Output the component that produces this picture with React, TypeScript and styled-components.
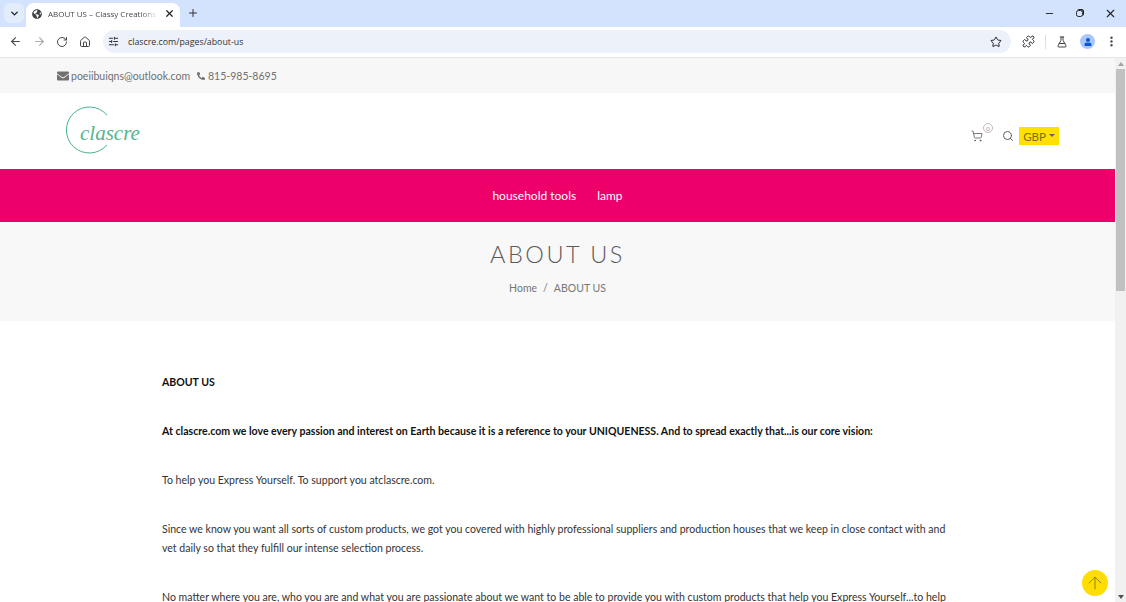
import React from "react";
import styled, { createGlobalStyle } from "styled-components";
import { ArrowLeft, ArrowRight, RotateCw, House, SlidersHorizontal, Star, Puzzle, FlaskConical, EllipsisVertical, ChevronDown, X, Plus, Minus, ShoppingCart, Search, ArrowUp } from "lucide-react";
import { FaEnvelope, FaGlobeAmericas, FaPhoneAlt, FaUser } from "react-icons/fa";

const Global = createGlobalStyle`
  html, body { margin: 0; padding: 0; height: 100%; overflow: hidden; background: #fff; }
  #root { height: 602px; width: 1126px; overflow: hidden; display: flex; flex-direction: column; font-family: "Lato", "Liberation Sans", sans-serif; }
  * { box-sizing: border-box; }
`;

const TabStrip = styled.div`
  height: 27px; background: #d3e3fd; display: flex; align-items: flex-end; flex: none;
`;
const TabSearch = styled.div`
  width: 20px; height: 20px; margin: 0 0 4px 4px; border-radius: 6px; background: #e3ecfb;
  display: flex; align-items: center; justify-content: center; color: #1f1f1f;
`;
const Tab = styled.div`
  width: 154px; height: 24px; margin-left: 2px; background: #fff; border-radius: 8px 8px 0 0;
  display: flex; align-items: center; padding: 0 5px 3px 6px; gap: 6px; color: #3c4043;
`;
const TabTitle = styled.span`
  flex: 1; min-width: 0; font-size: 8px; white-space: nowrap; overflow: hidden; color: #45474a;
  font-family: "Open Sans", sans-serif;
  mask-image: linear-gradient(90deg, #000 85%, transparent);
`;
const NewTab = styled.div`
  margin: 0 0 5px 7px; height: 18px; display: flex; align-items: center; color: #333;
`;
const WindowButtons = styled.div`
  margin: 0 9px 5px auto; height: 18px; display: flex; align-items: center; gap: 21px; color: #222;
`;
const RestoreGlyph = styled.span`
  width: 7px; height: 7px; border: 1.5px solid #222; border-radius: 2.5px; box-shadow: 1px -1px 0 0 #222;
`;
const Toolbar = styled.div`
  height: 31px; flex: none; background: #fff; display: flex; align-items: center; padding: 0 8px 1px 9px;
  border-bottom: 1px solid #e4e5e8; color: #444746;
`;
const NavIcons = styled.div`
  display: flex; align-items: center; gap: 10.5px; width: 94px;
`;
const Omnibox = styled.div`
  width: 908px; height: 23px; border-radius: 12px; background: #edf2fa; display: flex; align-items: center;
  padding: 0 9px 0 5px; gap: 9px; font-size: 8.8px; color: #333; font-family: "Open Sans", sans-serif;
`;
const Url = styled.span` flex: 1; `;
const ToolIcons = styled.div`
  display: flex; align-items: center; margin-left: 11px; flex: 1; justify-content: space-between;
`;
const Divider = styled.span` width: 1px; height: 14px; background: #dcdfe3; `;
const Avatar = styled.span`
  width: 15px; height: 15px; margin-left: 3px; border-radius: 50%; background: #a8c7fa; color: #0b57d0;
  display: flex; align-items: center; justify-content: center;
`;

const Viewport = styled.div`
  flex: 1; display: flex; min-height: 0; position: relative;
`;
const Page = styled.div`
  flex: 1; min-width: 0; overflow: hidden;
`;
const Scrollbar = styled.div`
  width: 11px; flex: none; background: #f1f1f1; display: flex; flex-direction: column; align-items: center; padding-top: 4px;
`;
const ScrollArrow = styled.span<{ $down?: boolean }>`
  width: 0; height: 0; border-left: 3.5px solid transparent; border-right: 3.5px solid transparent;
  ${p => p.$down ? "border-top: 4px solid #505050; margin-top: auto; margin-bottom: 3px;" : "border-bottom: 4px solid #a3a3a3;"}
`;
const ScrollThumb = styled.div`
  width: 9px; height: 222px; margin-top: 3px; background: #c1c1c1;
`;

const TopBar = styled.div`
  height: 35px; background: #f7f7f7; display: flex; align-items: center; padding-left: 57px; gap: 7px;
  font-size: 10.5px; color: #707070;
`;
const Contact = styled.span`
  display: inline-flex; align-items: center; gap: 2px;
`;
const PhoneContact = styled(Contact)`
  gap: 3px;
`;
const Header = styled.div`
  height: 76px; background: #fff; display: flex; align-items: center; padding: 0 56px 0 66px; justify-content: space-between;
`;
const Actions = styled.div`
  display: flex; align-items: center; margin-top: 10px; color: #5c5c5c;
`;
const Cart = styled.div`
  position: relative; width: 22px; height: 16px; margin-right: 9px; display: flex; align-items: center;
`;
const CartBadge = styled.span`
  position: absolute; left: 12px; top: -5px; width: 10px; height: 10px; border-radius: 50%; border: 1px solid #bbb;
  font-size: 6.5px; color: #999; display: flex; align-items: center; justify-content: center; background: #fff;
`;
const Currency = styled.div`
  width: 40px; height: 18px; margin-left: 5px; background: #ffe000; color: #77701f; font-size: 11.5px;
  display: flex; align-items: center; justify-content: center; gap: 3px;
`;
const Caret = styled.span`
  width: 0; height: 0; border-left: 3px solid transparent; border-right: 3px solid transparent; border-top: 3px solid #666;
  margin-top: -1px;
`;
const NavBar = styled.nav`
  height: 53px; background: #ee006b; display: flex; align-items: center; justify-content: center; gap: 21px;
  color: #fff; font-size: 12px;
`;
const Hero = styled.div`
  height: 99px; background: #f8f8f8; display: flex; flex-direction: column; align-items: center; padding-top: 17px;
`;
const HeroTitle = styled.h1`
  margin: 0; font-size: 23.5px; line-height: 30px; font-weight: 300; letter-spacing: 2.5px; color: #5a5a5a;
`;
const Crumbs = styled.div`
  margin-top: 10px; font-size: 10.5px; line-height: 18px; color: #777; display: flex; gap: 6px;
`;
const Article = styled.div`
  padding: 52px 165px 0 162px; font-size: 10.55px; line-height: 19px; color: #222;
`;
const Para = styled.p<{ $strong?: boolean }>`
  margin: 0 0 30px; font-weight: ${p => p.$strong ? 700 : 400}; color: ${p => p.$strong ? "#111" : "#333"};
`;
const ToTop = styled.div`
  position: absolute; right: 18px; bottom: 6px; width: 26px; height: 26px; border-radius: 50%; background: #ffdd00;
  color: #77721f; display: flex; align-items: center; justify-content: center;
`;

const Logo = () => (
  <svg width="76" height="50" viewBox="0 0 76 50" aria-label="clascre">
    <path d="M41 9.2 A23 23 0 1 0 41 38.8" fill="none" stroke="#45b58a" strokeWidth="1" />
    <text x="14" y="33.5" fontFamily='"Liberation Serif", serif' fontStyle="italic" fontSize="21" fill="#52b58e">clascre</text>
  </svg>
);

export default function App() {
  return (
    <>
      <Global />
      <TabStrip>
        <TabSearch><ChevronDown size={11} strokeWidth={3} /></TabSearch>
        <Tab>
          <FaGlobeAmericas size={10} />
          <TabTitle>ABOUT US – Classy Creations Co</TabTitle>
          <X size={11} strokeWidth={2.6} color="#222" />
        </Tab>
        <NewTab><Plus size={12} strokeWidth={2} /></NewTab>
        <WindowButtons>
          <Minus size={11} strokeWidth={2} />
          <RestoreGlyph />
          <X size={13} strokeWidth={2} />
        </WindowButtons>
      </TabStrip>
      <Toolbar>
        <NavIcons>
          <ArrowLeft size={13} strokeWidth={2} />
          <ArrowRight size={13} strokeWidth={2} color="#aaa" />
          <RotateCw size={12} strokeWidth={2} />
          <House size={12} strokeWidth={2} />
        </NavIcons>
        <Omnibox>
          <SlidersHorizontal size={11} strokeWidth={2.2} />
          <Url>clascre.com/pages/about-us</Url>
          <Star size={12} strokeWidth={2} color="#222" />
        </Omnibox>
        <ToolIcons>
          <Puzzle size={13} strokeWidth={1.8} color="#222" />
          <Divider />
          <FlaskConical size={12} strokeWidth={2} />
          <Avatar><FaUser size={8} /></Avatar>
          <EllipsisVertical size={13} strokeWidth={2.5} />
        </ToolIcons>
      </Toolbar>
      <Viewport>
        <Page>
          <TopBar>
            <Contact><FaEnvelope size={12} />poeiibuiqns@outlook.com</Contact>
            <PhoneContact><FaPhoneAlt size={8} />815-985-8695</PhoneContact>
          </TopBar>
          <Header>
            <Logo />
            <Actions>
              <Cart>
                <ShoppingCart size={12} strokeWidth={1.6} />
                <CartBadge>0</CartBadge>
              </Cart>
              <Search size={12} strokeWidth={2} />
              <Currency>GBP<Caret /></Currency>
            </Actions>
          </Header>
          <NavBar>
            <span>household tools</span>
            <span>lamp</span>
          </NavBar>
          <Hero>
            <HeroTitle>ABOUT US</HeroTitle>
            <Crumbs><span>Home</span><span>/</span><span>ABOUT US</span></Crumbs>
          </Hero>
          <Article>
            <Para $strong>ABOUT US</Para>
            <Para $strong>At clascre.com we love every passion and interest on Earth because it is a reference to your UNIQUENESS. And to spread exactly that...is our core vision:</Para>
            <Para>To help you Express Yourself. To support you atclascre.com.</Para>
            <Para>Since we know you want all sorts of custom products, we got you covered with highly professional suppliers and production houses that we keep in close contact with and vet daily so that they fulfill our intense selection process.</Para>
            <Para>No matter where you are, who you are and what you are passionate about we want to be able to provide you with custom products that help you Express Yourself...to help you express who you really are!</Para>
          </Article>
        </Page>
        <Scrollbar>
          <ScrollArrow />
          <ScrollThumb />
          <ScrollArrow $down />
        </Scrollbar>
        <ToTop><ArrowUp size={20} strokeWidth={1} /></ToTop>
      </Viewport>
    </>
  );
}
